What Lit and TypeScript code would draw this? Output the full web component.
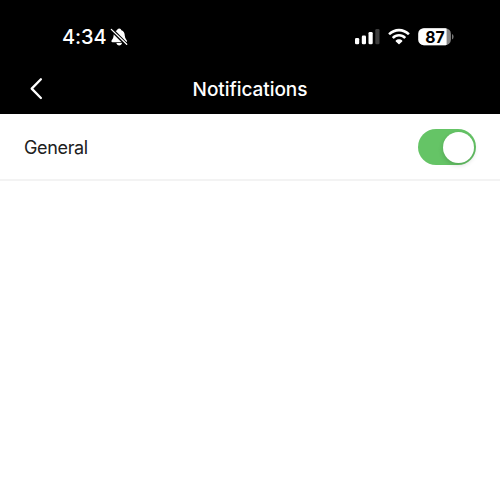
import { LitElement, html, css } from "lit";
import { customElement, property, state } from "lit/decorators.js";

@customElement("status-bar")
class StatusBar extends LitElement {
  static styles = css`
    :host { display: flex; justify-content: space-between; align-items: center; height: 74px; padding: 0 46px 0 62px; box-sizing: border-box; color: #fff; }
    .left, .right { display: flex; align-items: center; }
    .time { font-size: 20px; font-weight: 500; line-height: 24px; width: 48px; white-space: nowrap; letter-spacing: -0.1px; }
    .right { gap: 8px; }
    svg { display: block; }
    .level { font-size: 16.5px; font-weight: 700; }
  `;
  render() {
    return html`
      <div class="left">
        <span class="time">4:34</span>
        <svg width="20" height="20" viewBox="0 0 20 20">
          <path d="M9.2 1.4C10.4 1.4 11.2 2.2 11.4 3.3C13.7 4.1 14.7 6.1 14.8 8.7C14.9 11.6 16.8 12.6 17 14.1C17.1 14.8 16.7 15.2 15.9 15.2H2.5C1.7 15.2 1.3 14.8 1.4 14.1C1.7 12.6 3.5 11.6 3.6 8.7C3.7 6.1 4.8 4.1 7 3.3C7.2 2.2 8 1.4 9.2 1.4ZM6.4 16.1H12C11.7 17.6 10.7 18.5 9.2 18.5C7.7 18.5 6.7 17.6 6.4 16.1Z" fill="#fff"/>
          <path d="M1 2.1L16.7 17.8" stroke="#000" stroke-width="3.7"/>
          <path d="M1.3 2.4L16.7 17.3" stroke="#fff" stroke-width="1.3" stroke-linecap="round"/>
        </svg>
      </div>
      <div class="right">
        <svg width="26" height="18" viewBox="0 0 26 18">
          <rect x="1" y="10" width="4.2" height="6.3" rx="1.3" fill="#fff"/>
          <rect x="7.8" y="7.6" width="4.2" height="8.7" rx="1.3" fill="#fff"/>
          <rect x="14.5" y="4" width="4.2" height="12.3" rx="1.3" fill="#fff"/>
          <rect x="21.3" y="1" width="4.2" height="15.3" rx="1.3" fill="#3c3c3c"/>
        </svg>
        <svg width="22" height="18" viewBox="0 0 22 18" fill="#fff">
          <path d="M11 0.8C15.1 0.8 18.8 2.4 21.4 5C21.7 5.3 21.7 5.6 21.4 5.9L20.4 6.8C20.1 7.1 19.8 7.1 19.5 6.8C17.3 4.7 14.3 3.4 11 3.4S4.7 4.7 2.5 6.8C2.2 7.1 1.9 7.1 1.6 6.8L0.6 5.9C0.3 5.6 0.3 5.3 0.6 5C3.2 2.4 6.9 0.8 11 0.8Z"/>
          <path d="M11 6C13.7 6 16.1 7 17.8 8.7C18.1 9 18.1 9.3 17.8 9.6L16.7 10.6C16.4 10.9 16.1 10.9 15.8 10.6C14.6 9.4 12.8 8.6 11 8.6S7.4 9.4 6.2 10.6C5.9 10.9 5.6 10.9 5.3 10.6L4.2 9.6C3.9 9.3 3.9 9 4.2 8.7C5.9 7 8.3 6 11 6Z"/>
          <path d="M11 11.3C12.3 11.3 13.5 11.8 14.2 12.5C14.5 12.8 14.5 13.1 14.2 13.4L11.5 16.1C11.2 16.4 10.8 16.4 10.5 16.1L7.8 13.4C7.5 13.1 7.5 12.8 7.8 12.5C8.5 11.8 9.7 11.3 11 11.3Z"/>
        </svg>
        <svg width="36" height="18" viewBox="0 0 36 18">
          <clipPath id="cell"><rect x="0.3" y="0.2" width="32.6" height="17" rx="5.6"/></clipPath>
          <g clip-path="url(#cell)">
            <rect width="34" height="18" fill="#858585"/>
            <rect width="28.6" height="18" fill="#fff"/>
          </g>
          <path d="M34 6Q35.6 6.8 35.6 8.8T34 11.6Z" fill="#777"/>
          <text class="level" x="17" y="14.5" text-anchor="middle" textLength="19.4" lengthAdjust="spacingAndGlyphs">87</text>
        </svg>
      </div>`;
  }
}

@customElement("nav-header")
class NavHeader extends LitElement {
  @property() heading = "";
  static styles = css`
    :host { display: grid; grid-template-columns: 64px 1fr 64px; align-items: center; height: 40px; padding-bottom: 10px; box-sizing: border-box; color: #fff; }
    .back { display: flex; padding: 0 0 0 28px; border: 0; background: none; color: inherit; }
    h1 { margin: 0; padding-top: 2px; text-align: center; font-size: 19px; line-height: 24px; font-weight: 500; letter-spacing: -0.05px; }
  `;
  render() {
    return html`
      <button class="back" aria-label="Back">
        <svg width="16" height="24" viewBox="0 0 16 24"><path d="M12.9 2.2L3.7 11.6L12.9 21" fill="none" stroke="currentColor" stroke-width="2.3" stroke-linecap="round" stroke-linejoin="round"/></svg>
      </button>
      <h1>${this.heading}</h1>`;
  }
}

@customElement("toggle-switch")
class ToggleSwitch extends LitElement {
  @property({ type: Boolean, reflect: true }) checked = false;
  static styles = css`
    :host { display: flex; align-items: center; width: 58px; height: 35.5px; padding: 2px; box-sizing: border-box; border-radius: 18px; background: #ddd; }
    :host([checked]) { justify-content: flex-end; background: #65c466; }
    .knob { width: 31px; height: 31px; border-radius: 50%; background: #fff; box-shadow: 0 2px 5px rgba(0, 0, 0, 0.16); }
  `;
  render() {
    return html`<div class="knob"></div>`;
  }
}

@customElement("app-root")
class AppRoot extends LitElement {
  @state() private general = true;
  static styles = css`
    :host { display: block; height: 500px; background: #fff; font-family: Inter, "Liberation Sans", sans-serif; }
    .top { background: #000; }
    .row { display: flex; align-items: center; justify-content: space-between; height: 67px; padding: 1px 24px 0; box-sizing: border-box; border-bottom: 2px solid #f3f3f3; color: #202020; font-size: 18px; }
    .label { padding-top: 1px; letter-spacing: -0.35px; }
  `;
  render() {
    return html`
      <header class="top">
        <status-bar></status-bar>
        <nav-header heading="Notifications"></nav-header>
      </header>
      <div class="row">
        <span class="label">General</span>
        <toggle-switch ?checked=${this.general} @click=${() => (this.general = !this.general)}></toggle-switch>
      </div>`;
  }
}
